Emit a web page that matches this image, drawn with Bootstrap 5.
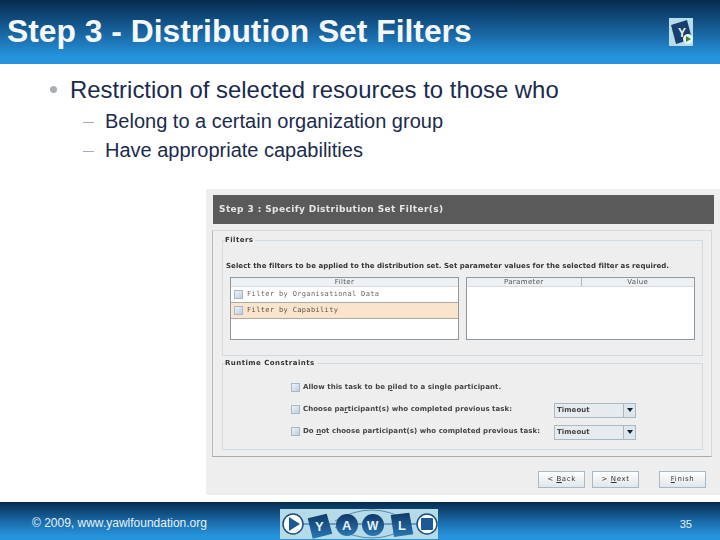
<!DOCTYPE html>
<html lang="en">
<head>
  <meta charset="UTF-8">
  <meta name="viewport" content="width=device-width, initial-scale=1.0">
  <title>Step 3 - Distribution Set Filters</title>
  <link href="https://cdn.jsdelivr.net/npm/bootstrap@5.3.0/dist/css/bootstrap.min.css" rel="stylesheet">
  <style>
    html, body { height: 540px; overflow: hidden; }
    body { font-family: "Liberation Sans", Arial, sans-serif; background: #fff; }
    .slide { width: 720px; height: 540px; }
    .slide-head { height: 64px; background: linear-gradient(#062b50, #1c6fae 60%, #2594dc 88%); padding: 0 27px 0 7px; }
    .slide-title { font-size: 31.8px; font-weight: 700; color: #f4f8fb; margin: 0; line-height: 1; }
    .slide-body { height: 438px; }
    .points { list-style: none; margin: 0; padding: 12px 0 0 50px; color: #1a2b4d; }
    .points-main { font-size: 23.9px; line-height: 28px; display: flex; gap: 13px; }
    .points-main::before { content: ""; width: 7px; height: 7px; border-radius: 50%; background: #a8aeb4; margin-top: 10px; }
    .points-sub { font-size: 20px; line-height: 29px; padding-left: 55px; position: relative; }
    .points-sub::before { content: ""; position: absolute; left: 33px; top: 15px; width: 11px; height: 1px; background: #a3abb6; }
    .points-main + .points-sub { margin-top: 3px; }
    .shot { width: 514px; height: 306px; margin: 24px 0 0 206px; background: #eee; padding: 6px 6px 0 7px; font-family: "DejaVu Sans", sans-serif; color: #333; }
    .shot-bar { height: 29px; background: #5a5a5a; color: #e6e6e6; font-size: 9px; font-weight: 700; letter-spacing: .4px; padding-left: 6px; filter: blur(.3px); }
    .shot-frame { height: 227px; margin: 6px 0 0 -1px; width: 500px; border: 1px solid #d8d8d8; border-bottom-color: #aaa; border-left-color: #bbb; padding: 9px 8px 0 9px; }
    .group { border: 1px solid #cfdbe3; position: relative; }
    .group-filters { height: 116px; padding: 21px 7px 0 7px; }
    .group-runtime { height: 87px; margin-top: 7px; }
    .group-label { position: absolute; left: 2px; top: -5px; background: #eee; font-size: 7px; line-height: 9px; font-weight: 700; letter-spacing: .45px; padding-right: 2px; filter: blur(.25px); }
    .shot-hint { font-size: 7px; line-height: 9px; font-weight: 700; letter-spacing: .05px; white-space: nowrap; margin-left: -4px; filter: blur(.25px); }
    .grid-box { height: 63px; border: 1px solid #8f979f; background: #fff; margin-top: 6px; font-size: 7px; letter-spacing: .35px; filter: blur(.25px); }
    .grid-left, .grid-right { width: 229px; }
    .grid-head { height: 9px; background: #eef1f4; line-height: 9px; text-align: center; border-bottom: 1px solid #d5dbe0; color: #555; }
    .grid-cell + .grid-cell { border-left: 1px solid #a9b4be; }
    .grid-row { height: 16px; line-height: 15px; display: flex; align-items: center; gap: 4px; padding-left: 3px; border-bottom: 1px solid #aaa; color: #666; font-family: "DejaVu Sans Mono", monospace; }
    .grid-row-sel { background: #fae5cc; color: #554; }
    .tick { width: 9px; height: 9px; background: linear-gradient(135deg, #eef3f7, #bccfe0); border: 1px solid #a8b8c6; flex: none; }
    .rule-list { padding: 12px 0 0 68px; font-size: 7px; letter-spacing: .05px; font-weight: 700; filter: blur(.25px); color: #444; }
    .rule-row { height: 22px; display: flex; align-items: center; gap: 3px; white-space: nowrap; }
    .rule-text { width: 248px; }
    .drop { width: 82px; height: 15px; border: 1px solid #a9b8c4; background: #e6ebef; display: flex; align-items: center; margin-top: 2px; }
    .drop span { flex: 1; padding-left: 2px; }
    .drop i { width: 12px; height: 100%; background: #dbe6ee; border-left: 1px solid #a9b8c4; display: flex; align-items: center; justify-content: center; }
    .drop i::after { content: ""; border: 3.5px solid transparent; border-top: 4px solid #222; border-bottom: 0; }
    .shot-btns { margin-top: 14px; padding-right: 8px; font-size: 7px; letter-spacing: .6px; gap: 7px; filter: blur(.25px); }
    .shot-btn { width: 47px; height: 17px; border: 1px solid #a9b8c4; background: linear-gradient(#fff, #dfe6ec); display: flex; align-items: center; justify-content: center; white-space: pre; }
    .shot-btn-finish { margin-left: 13px; }
    .slide-foot { height: 38px; background: linear-gradient(#062b50, #1c6fae 55%, #2594dc 90%); position: relative; }
    .foot-copy { width: 280px; padding: 4px 0 0 32px; font-size: 12px; color: #e8f2f9; }
    .foot-num { flex: 1; text-align: right; padding: 6px 28px 0 0; font-size: 11px; color: #e8f2f9; }
    .foot-logo { display: block; margin-top: 6px; }
  </style>
</head>
<body>
  <div class="slide d-flex flex-column">
    <header class="slide-head d-flex align-items-center justify-content-between">
      <h1 class="slide-title">Step 3 - Distribution Set Filters</h1>
      <svg width="24" height="28" viewBox="0 0 24 28">
        <rect width="24" height="28" fill="#b9dcea"/>
        <path d="M2 7 18 2 23 21 7 26Z" fill="#163f70"/>
        <text x="9" y="19" font-family="Liberation Sans" font-size="12" font-weight="700" fill="#e8f2f9">Y</text>
        <circle cx="19" cy="21" r="5" fill="#eef6ee"/>
        <path d="M17 18 22 21 17 24Z" fill="#2e8b3a"/>
      </svg>
    </header>

    <main class="slide-body">
      <ul class="points">
        <li class="points-main">Restriction of selected resources to those who</li>
        <li class="points-sub">Belong to a certain organization group</li>
        <li class="points-sub">Have appropriate capabilities</li>
      </ul>

      <div class="shot">
        <div class="shot-bar d-flex align-items-center">Step 3 : Specify Distribution Set Filter(s)</div>
        <div class="shot-frame">
          <div class="group group-filters">
            <div class="group-label">Filters</div>
            <div class="shot-hint">Select the filters to be applied to the distribution set. Set parameter values for the selected filter as required.</div>
            <div class="d-flex justify-content-between">
              <div class="grid-box grid-left">
                <div class="grid-head">Filter</div>
                <div class="grid-row"><span class="tick"></span>Filter by Organisational Data</div>
                <div class="grid-row grid-row-sel"><span class="tick"></span>Filter by Capability</div>
              </div>
              <div class="grid-box grid-right">
                <div class="grid-head d-flex">
                  <div class="grid-cell w-50">Parameter</div>
                  <div class="grid-cell w-50">Value</div>
                </div>
              </div>
            </div>
          </div>
          <div class="group group-runtime">
            <div class="group-label">Runtime Constraints</div>
            <div class="rule-list">
              <div class="rule-row"><span class="tick"></span><span>Allow this task to be <u>p</u>iled to a single participant.</span></div>
              <div class="rule-row"><span class="tick"></span><span class="rule-text">Choose pa<u>r</u>ticipant(s) who completed previous task:</span><div class="drop"><span>Timeout</span><i></i></div></div>
              <div class="rule-row"><span class="tick"></span><span class="rule-text">Do <u>n</u>ot choose participant(s) who completed previous task:</span><div class="drop"><span>Timeout</span><i></i></div></div>
            </div>
          </div>
        </div>
        <div class="shot-btns d-flex justify-content-end">
          <div class="shot-btn"><span>&lt; <u>B</u>ack</span></div>
          <div class="shot-btn"><span>&gt; <u>N</u>ext</span></div>
          <div class="shot-btn shot-btn-finish"><span><u>F</u>inish</span></div>
        </div>
      </div>
    </main>

    <footer class="slide-foot d-flex align-items-center">
      <div class="foot-copy">© 2009, www.yawlfoundation.org</div>
      <svg class="foot-logo" width="158" height="30" viewBox="0 0 158 30" font-family="Liberation Sans" font-weight="700">
        <defs>
          <linearGradient id="logoBlue" x1="0" y1="0" x2="0" y2="1">
            <stop offset="0" stop-color="#0f3866"/>
            <stop offset="1" stop-color="#2a78b4"/>
          </linearGradient>
        </defs>
        <rect width="158" height="30" fill="#b5dbe9"/>
        <path d="M55 12Q92 -10 128 12M55 18Q92 40 128 18" fill="none" stroke="#5b8aa8"/>
        <path d="M20 15H138" stroke="#2d5f8a"/>
        <circle cx="13" cy="15" r="10" fill="#fff" stroke="#1d4f80" stroke-width="1.5"/>
        <path d="M9 8 20 15 9 22Z" fill="#1d5a94"/>
        <path d="M27.700 9.300 46.700 4.700 52.300 24.700 32.700 29.700Z" fill="url(#logoBlue)"/>
        <text x="35" y="22" font-size="13" fill="#e8f2f9">Y</text>
        <circle cx="67" cy="16" r="11" fill="url(#logoBlue)"/>
        <text x="62" y="21" font-size="13" fill="#e8f2f9">A</text>
        <circle cx="93" cy="16" r="11" fill="url(#logoBlue)"/>
        <text x="87" y="21" font-size="12" fill="#e8f2f9">W</text>
        <path d="M110.700 6 129.300 3.700 133.300 25.300 114 28Z" fill="url(#logoBlue)"/>
        <text x="118" y="21" font-size="13" fill="#e8f2f9">L</text>
        <circle cx="147" cy="15" r="10" fill="#fff" stroke="#1d4f80" stroke-width="1.5"/>
        <rect x="141" y="9" width="12" height="12" rx="1" fill="#1d5a94"/>
      </svg>
      <div class="foot-num">35</div>
    </footer>
  </div>
  <script src="https://cdn.jsdelivr.net/npm/bootstrap@5.3.0/dist/js/bootstrap.bundle.min.js"></script>
</body>
</html>
